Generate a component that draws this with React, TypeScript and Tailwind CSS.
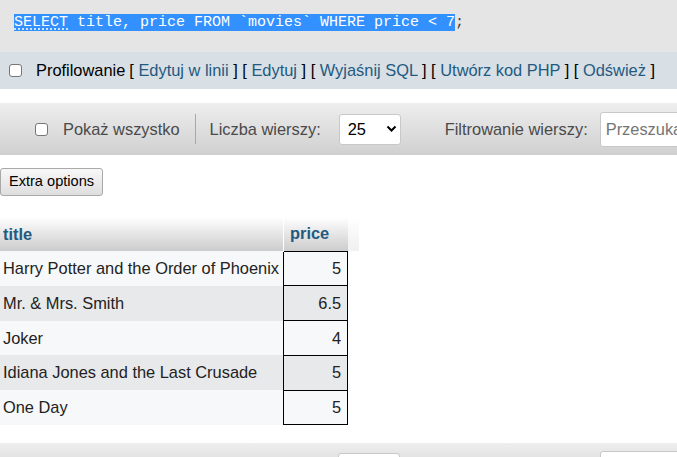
import React from "react";

const rows: [string, string][] = [
  ["Harry Potter and the Order of Phoenix", "5"],
  ["Mr. & Mrs. Smith", "6.5"],
  ["Joker", "4"],
  ["Idiana Jones and the Last Crusade", "5"],
  ["One Day", "5"],
];

function Box() {
  return (
    <span className="inline-block w-[13px] h-[13px] rounded-[3px] border border-[#767676] bg-white shrink-0" />
  );
}

function L({ children }: { children: React.ReactNode }) {
  return (
    <>
      <span className="text-black">[</span>
      <span className="text-[#235a81]"> {children} </span>
      <span className="text-black">]</span>{" "}
    </>
  );
}

export default function App() {
  return (
    <div
      className="w-[677px] h-[457px] overflow-hidden bg-white relative"
      style={{ fontFamily: '"Liberation Sans", Arial, sans-serif' }}
    >
      {/* SQL query */}
      <div className="h-[52px] bg-[#e5e5e5] pt-[11px] pl-[14px]">
        <div
          className="text-[15px] leading-[24px] whitespace-pre"
          style={{ fontFamily: '"Liberation Mono", monospace' }}
        >
          <span className="bg-[#3390ff] text-white">
            <span className="underline decoration-dotted underline-offset-[3px]">SELECT</span>
            {" title, price FROM `movies` WHERE price < 7"}
          </span>
          <span className="text-[#444]">;</span>
        </div>
      </div>
      {/* profiling row */}
      <div className="h-[37px] bg-[#d8dfe5] flex items-center pl-[9px] text-[16.4px] whitespace-nowrap">
        <Box />
        <span className="ml-[14px] text-black">Profilowanie </span>
        <span className="ml-[4px]">
          <L>Edytuj w linii</L>
          <L>Edytuj</L>
          <L>Wyjaśnij SQL</L>
          <L>Utwórz kod PHP</L>
          <L>Odśwież</L>
        </span>
      </div>
      {/* toolbar */}
      <div className="mt-[14px] h-[52px] bg-gradient-to-b from-[#eeeeee] to-[#d0d0d0] flex items-center pl-[35px] text-[16.4px] text-[#4a4a4a] whitespace-nowrap">
        <Box />
        <span className="ml-[15px]">Pokaż wszystko</span>
        <span className="ml-[15px] w-px h-[30px] bg-[#a8a8a8] shrink-0 block" />
        <span className="ml-[14px]">Liczba wierszy:</span>
        <div className="ml-[18px] w-[62px] h-[31px] bg-white border border-[#c8c8c8] rounded-[3px] flex items-center pl-[8px] text-black shrink-0">
          <span>25</span>
          <svg className="ml-[20px]" width="11" height="8" viewBox="0 0 11 8">
            <path d="M1.5 1.5 L5.5 5.5 L9.5 1.5" stroke="#000" strokeWidth="2" fill="none" />
          </svg>
        </div>
        <span className="ml-[44px]">Filtrowanie wierszy:</span>
        <div className="ml-[12px] w-[120px] h-[35px] bg-white border border-[#c8c8c8] rounded-[3px] flex items-center pl-[5px] text-[#757575] shrink-0 overflow-hidden">
          Przeszukaj
        </div>
      </div>
      {/* extra options */}
      <div className="mt-[13px]">
        <button className="h-[28px] w-[103px] bg-gradient-to-b from-[#f8f8f8] to-[#dedede] border border-[#a9a9a9] rounded-[3px] text-[14.6px] text-black">
          Extra options
        </button>
      </div>
      {/* table */}
      <table className="mt-[21px] border-collapse text-[16.4px]">
        <thead>
          <tr className="h-[34px]">
            <th className="w-[283px] text-left pl-[3px] font-bold text-[#235a81] bg-gradient-to-b from-white to-[#cccccc] border-r border-white">
              title
            </th>
            <th className="w-[64px] text-left pl-[6px] font-bold text-[#235a81] bg-gradient-to-b from-white to-[#cccccc]">
              price
            </th>
            <th className="w-[11px] bg-gradient-to-b from-white to-[#f0f0f0]" />
          </tr>
        </thead>
        <tbody>
          {rows.map(([t, p], i) => (
            <tr key={i} className={`h-[34.8px] ${i % 2 === 0 ? "bg-[#f7f8f9]" : "bg-[#e8e9eb]"}`}>
              <td className="pl-[3px] pr-[4px] text-[#222] whitespace-nowrap">{t}</td>
              <td className="text-right pr-[6px] text-[#222] border border-black">{p}</td>
              <td className="bg-white" />
            </tr>
          ))}
        </tbody>
      </table>
      {/* bottom toolbar */}
      <div className="mt-[18px] h-[40px] bg-gradient-to-b from-[#eeeeee] to-[#d0d0d0] relative">
        <div className="absolute left-[338px] top-[10px] w-[62px] h-[30px] bg-white border border-[#c8c8c8] rounded-[3px]" />
        <div className="absolute left-[600px] top-[8px] w-[120px] h-[35px] bg-white border border-[#c8c8c8] rounded-[3px]" />
      </div>
    </div>
  );
}
